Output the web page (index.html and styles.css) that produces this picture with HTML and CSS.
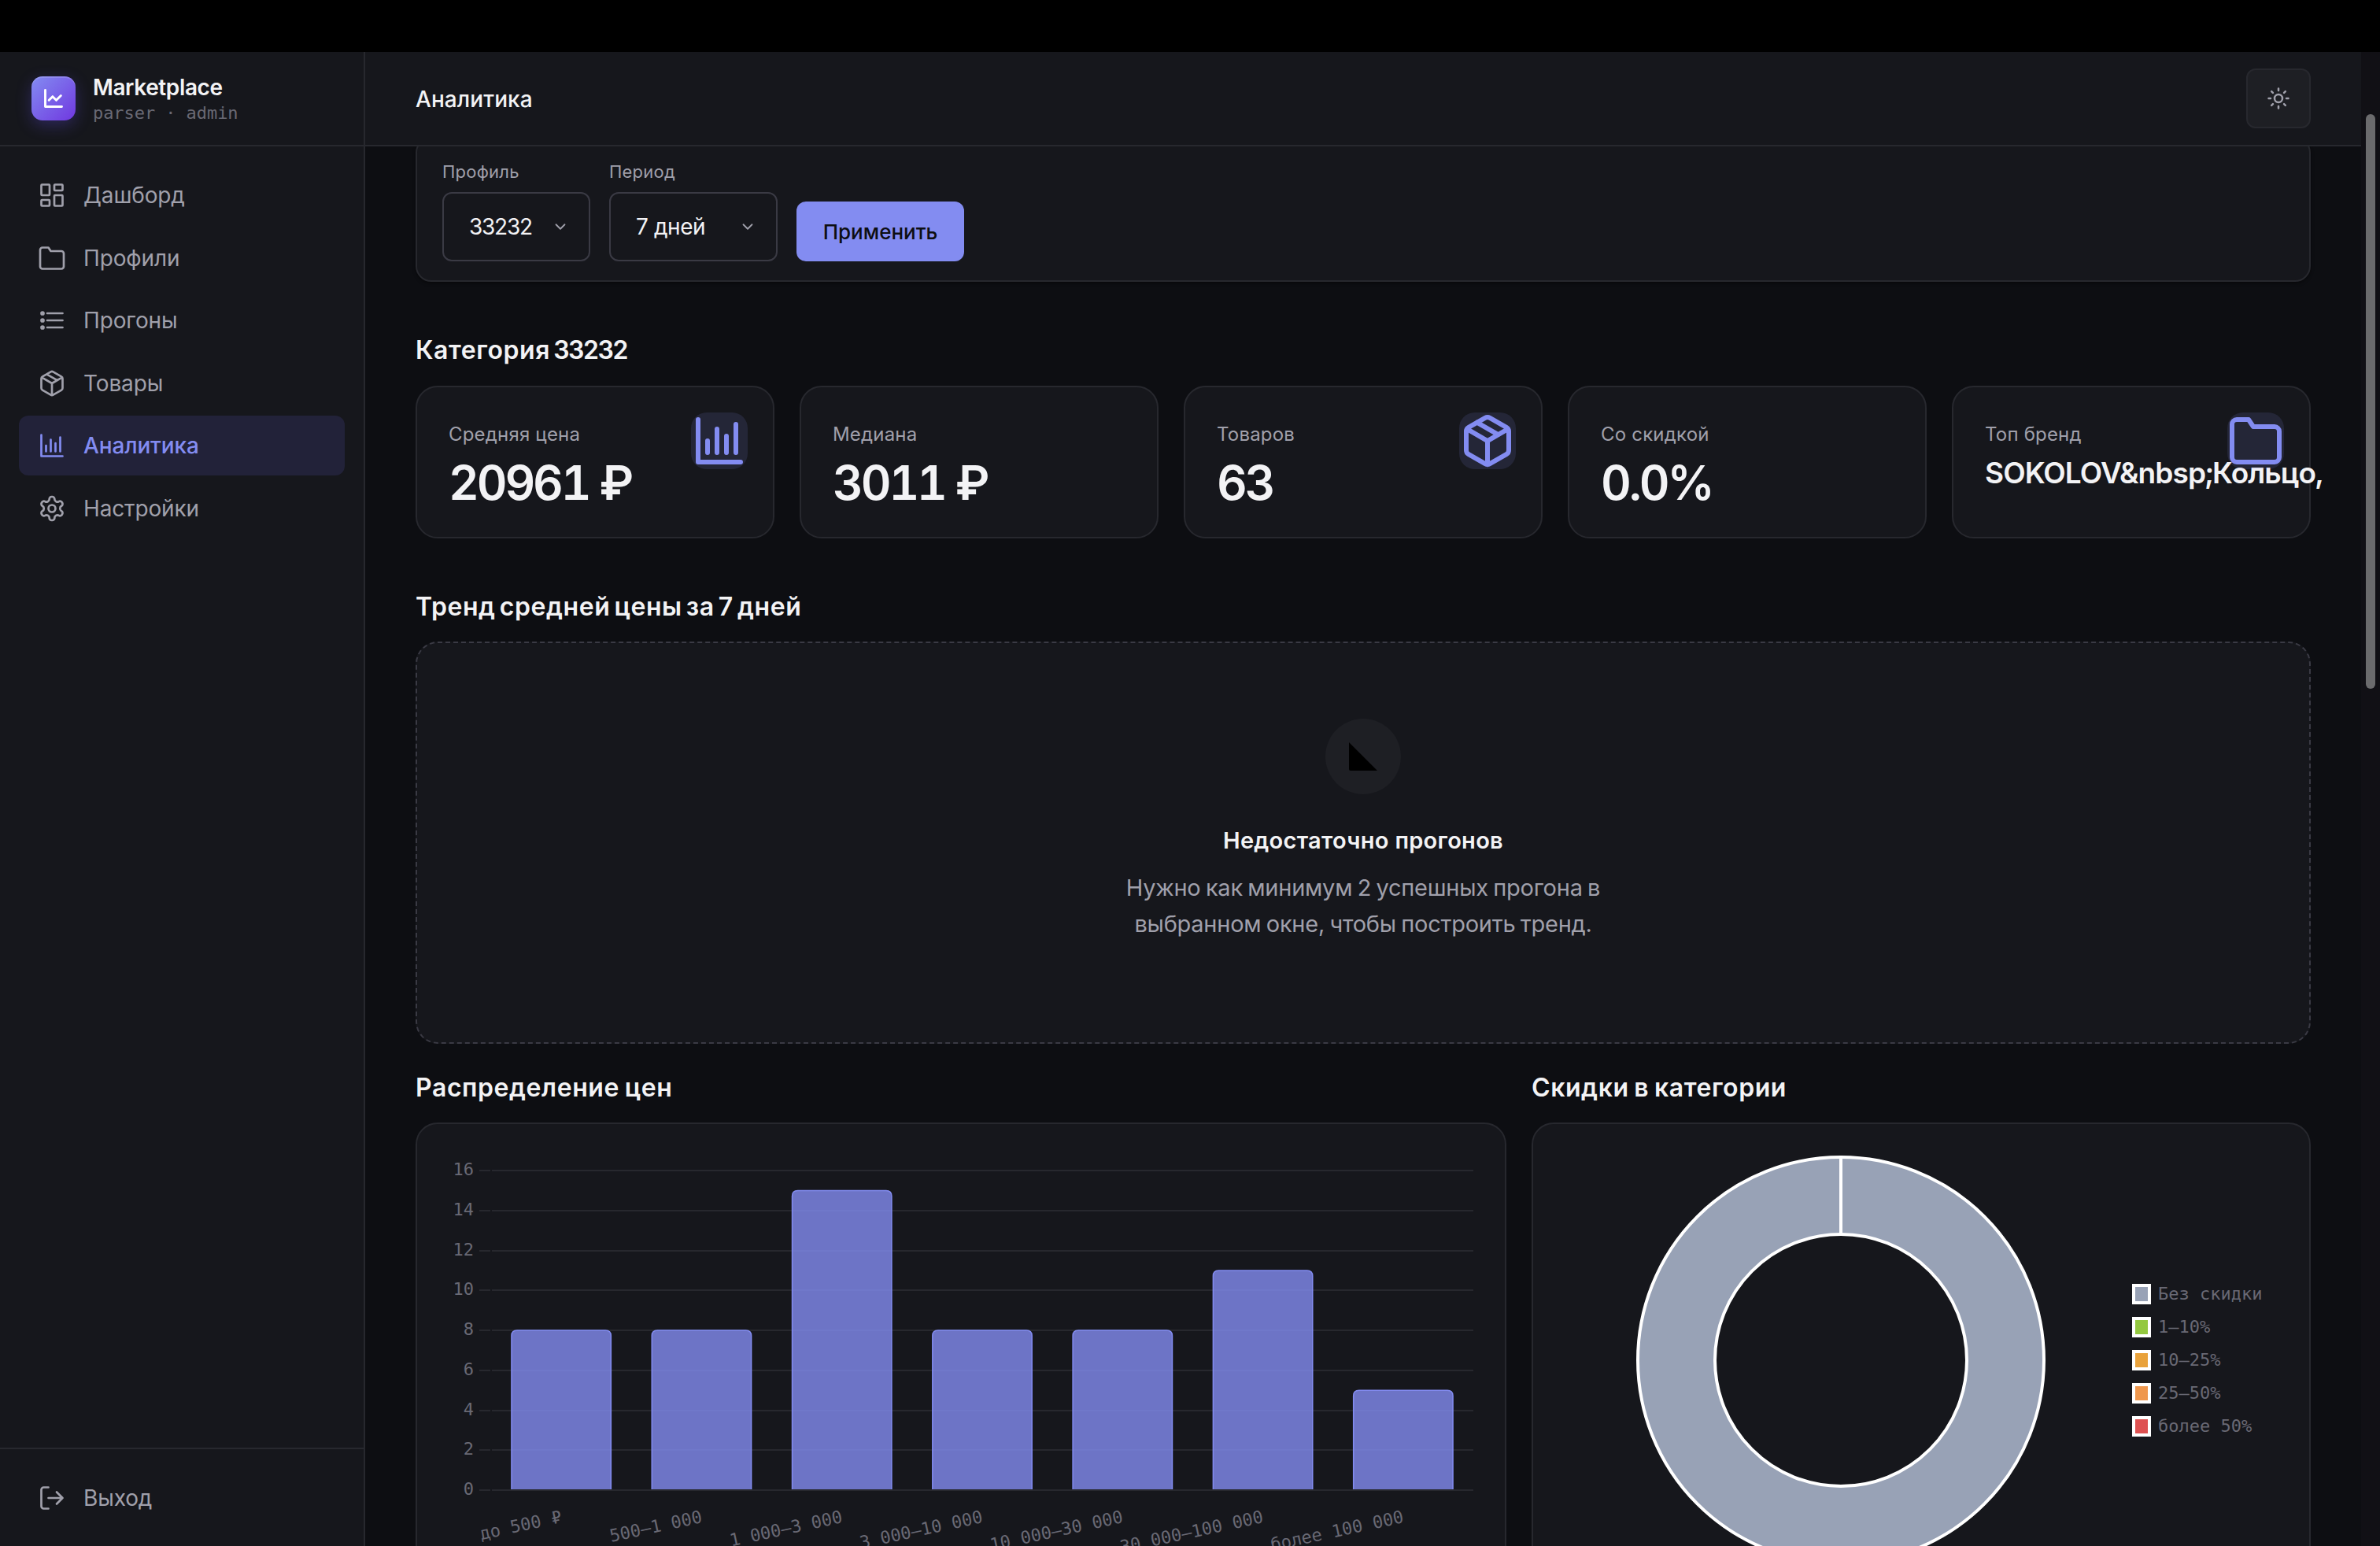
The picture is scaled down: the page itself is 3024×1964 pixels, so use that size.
FILE: index.html
```
<!DOCTYPE html>
<html lang="ru">
<head>
    <meta charset="UTF-8">
    <meta name="viewport" content="width=device-width, initial-scale=1.0">
    <title>Аналитика - Marketplace parser</title>
    <link rel="stylesheet" href="styles.css">
</head>
<body>
    <svg class="sprite" aria-hidden="true">
        <symbol id="i-dashboard" viewBox="0 0 24 24"><rect x="3" y="3" width="7" height="9" rx=".6"/><rect x="14" y="3" width="7" height="5" rx=".6"/><rect x="14" y="12" width="7" height="9" rx=".6"/><rect x="3" y="16" width="7" height="5" rx=".6"/></symbol>
        <symbol id="i-folder" viewBox="0 0 24 24"><path d="M22 19a2 2 0 0 1-2 2H4a2 2 0 0 1-2-2V5a2 2 0 0 1 2-2h5l2 3h9a2 2 0 0 1 2 2z"/></symbol>
        <symbol id="i-list" viewBox="0 0 24 24"><path d="M8 6h13M8 12h13M8 18h13"/><circle cx="4" cy="6" r="1"/><circle cx="4" cy="12" r="1"/><circle cx="4" cy="18" r="1"/></symbol>
        <symbol id="i-package" viewBox="0 0 24 24"><path d="M16.5 9.4l-9-5.19M21 16V8a2 2 0 0 0-1-1.73l-7-4a2 2 0 0 0-2 0l-7 4A2 2 0 0 0 3 8v8a2 2 0 0 0 1 1.73l7 4a2 2 0 0 0 2 0l7-4A2 2 0 0 0 21 16zM3.27 6.96L12 12.01l8.73-5.05M12 22.08V12"/></symbol>
        <symbol id="i-chart" viewBox="0 0 24 24"><path d="M3 3v18h18M7 12v5M11 7v10M15 10v7M19 5v12"/></symbol>
        <symbol id="i-settings" viewBox="0 0 24 24"><path d="M12.22 2h-.44a2 2 0 0 0-2 2v.18a2 2 0 0 1-1 1.73l-.43.25a2 2 0 0 1-2 0l-.15-.08a2 2 0 0 0-2.73.73l-.22.38a2 2 0 0 0 .73 2.73l.15.1a2 2 0 0 1 1 1.72v.51a2 2 0 0 1-1 1.74l-.15.09a2 2 0 0 0-.73 2.73l.22.38a2 2 0 0 0 2.73.73l.15-.08a2 2 0 0 1 2 0l.43.25a2 2 0 0 1 1 1.73V20a2 2 0 0 0 2 2h.44a2 2 0 0 0 2-2v-.18a2 2 0 0 1 1-1.73l.43-.25a2 2 0 0 1 2 0l.15.08a2 2 0 0 0 2.73-.73l.22-.39a2 2 0 0 0-.73-2.73l-.15-.08a2 2 0 0 1-1-1.74v-.5a2 2 0 0 1 1-1.74l.15-.09a2 2 0 0 0 .73-2.73l-.22-.38a2 2 0 0 0-2.73-.73l-.15.08a2 2 0 0 1-2 0l-.43-.25a2 2 0 0 1-1-1.73V4a2 2 0 0 0-2-2z"/><circle cx="12" cy="12" r="3"/></symbol>
        <symbol id="i-logout" viewBox="0 0 24 24"><path d="M9 21H5a2 2 0 0 1-2-2V5a2 2 0 0 1 2-2h4M16 17l5-5-5-5M21 12H9"/></symbol>
        <symbol id="i-sun" viewBox="0 0 24 24"><circle cx="12" cy="12" r="4"/><path d="M12 2v2M12 20v2M4.93 4.93l1.41 1.41M17.66 17.66l1.41 1.41M2 12h2M20 12h2M6.34 17.66l-1.41 1.41M19.07 4.93l-1.41 1.41"/></symbol>
        <symbol id="i-down" viewBox="0 0 24 24"><path d="M6 9l6 6 6-6"/></symbol>
    </svg>

    <div class="app">
        <aside class="sidebar">
            <div class="brand">
                <div class="brand-logo">
                    <svg viewBox="0 0 24 24"><path d="M3 3v18h18M7 14l4-4 4 4 5-5"/></svg>
                </div>
                <div class="brand-text">
                    <div class="brand-name">Marketplace</div>
                    <div class="brand-sub">parser · admin</div>
                </div>
            </div>
            <nav class="nav">
                <a class="nav-item"><svg><use href="#i-dashboard"/></svg>Дашборд</a>
                <a class="nav-item"><svg><use href="#i-folder"/></svg>Профили</a>
                <a class="nav-item"><svg><use href="#i-list"/></svg>Прогоны</a>
                <a class="nav-item"><svg><use href="#i-package"/></svg>Товары</a>
                <a class="nav-item active"><svg><use href="#i-chart"/></svg>Аналитика</a>
                <a class="nav-item"><svg><use href="#i-settings"/></svg>Настройки</a>
            </nav>
            <div class="sidebar-footer">
                <a class="nav-item"><svg><use href="#i-logout"/></svg>Выход</a>
            </div>
        </aside>

        <div class="main">
            <header class="topbar">
                <h1>Аналитика</h1>
                <button class="theme-toggle"><svg><use href="#i-sun"/></svg></button>
            </header>

            <main class="content">
                <div class="filters">
                    <div class="field">
                        <label>Профиль</label>
                        <div class="select select-profile">33232<svg><use href="#i-down"/></svg></div>
                    </div>
                    <div class="field">
                        <label>Период</label>
                        <div class="select select-period">7 дней<svg><use href="#i-down"/></svg></div>
                    </div>
                    <button class="btn">Применить</button>
                </div>

                <h2 class="section-title title-category">Категория <span class="category-id">33232</span></h2>
                <div class="stats">
                    <div class="stat">
                        <div class="stat-label">Средняя цена</div>
                        <div class="stat-value">20961 ₽</div>
                        <div class="stat-icon"><svg><use href="#i-chart"/></svg></div>
                    </div>
                    <div class="stat">
                        <div class="stat-label">Медиана</div>
                        <div class="stat-value">3011 ₽</div>
                    </div>
                    <div class="stat">
                        <div class="stat-label">Товаров</div>
                        <div class="stat-value">63</div>
                        <div class="stat-icon"><svg><use href="#i-package"/></svg></div>
                    </div>
                    <div class="stat">
                        <div class="stat-label">Со скидкой</div>
                        <div class="stat-value">0.0%</div>
                    </div>
                    <div class="stat">
                        <div class="stat-label">Топ бренд</div>
                        <div class="stat-value stat-brand">SOKOLOV&amp;nbsp;Кольцо,</div>
                        <div class="stat-icon"><svg><use href="#i-folder"/></svg></div>
                    </div>
                </div>

                <h2 class="section-title title-trend">Тренд средней цены за 7 дней</h2>
                <div class="empty">
                    <div class="empty-icon">
                        <svg viewBox="0 0 24 24"><path d="M3 3v17a1 1 0 0 0 1 1h17z"/></svg>
                    </div>
                    <div class="empty-title">Недостаточно прогонов</div>
                    <p class="empty-text">Нужно как минимум 2 успешных прогона в выбранном окне, чтобы построить тренд.</p>
                </div>

                <div class="charts">
                    <section>
                        <h2 class="section-title title-chart">Распределение цен</h2>
                        <div class="chart-card">
                            <svg id="histogram" class="histogram" viewBox="0 0 1382 560"></svg>
                        </div>
                    </section>
                    <section>
                        <h2 class="section-title title-chart">Скидки в категории</h2>
                        <div class="chart-card donut-card">
                            <svg class="donut" viewBox="0 0 520 520">
                                <circle class="donut-ring" cx="260" cy="260" r="209"/>
                                <circle class="donut-line" cx="260" cy="260" r="258"/>
                                <circle class="donut-line" cx="260" cy="260" r="160"/>
                                <path class="donut-line" d="M260 2v98"/>
                            </svg>
                            <ul class="legend">
                                <li class="l-none">Без скидки</li>
                                <li class="l-10">1–10%</li>
                                <li class="l-25">10–25%</li>
                                <li class="l-50">25–50%</li>
                                <li class="l-max">более 50%</li>
                            </ul>
                        </div>
                    </section>
                </div>
            </main>
        </div>

        <div class="scrollbar"><div class="scrollbar-thumb"></div></div>
    </div>

<script>
const bins = [
    { label: 'до 500 ₽', count: 8 },
    { label: '500–1 000', count: 8 },
    { label: '1 000–3 000', count: 15 },
    { label: '3 000–10 000', count: 8 },
    { label: '10 000–30 000', count: 8 },
    { label: '30 000–100 000', count: 11 },
    { label: 'более 100 000', count: 5 }
];

const left = 94, right = 1342, bottom = 465, unit = 25.375;
const step = (right - left) / bins.length;
const barWidth = step * 0.72;
let out = '';

// Сетка и подписи оси Y
for (let v = 0; v <= 16; v += 2) {
    const y = Math.round(bottom - v * unit);
    out += `<path class="grid" d="M79 ${y}H93M95 ${y}H${right}"/>
        <text class="tick" x="72" y="${y + 6}" text-anchor="end">${v}</text>`;
}

// Столбцы и наклонные подписи оси X
bins.forEach((bin, i) => {
    const cx = left + step * (i + 0.5);
    const x0 = cx - barWidth / 2 + 1, x1 = cx + barWidth / 2 - 1;
    const top = bottom - bin.count * unit;
    out += `<path class="bar" d="M${x0} ${bottom - 1}V${top + 7}q0 -7 7 -7H${x1 - 7}q7 0 7 7V${bottom - 1}"/>
        <text class="tick" transform="translate(${cx} 498) rotate(-12.2)" y="8" text-anchor="end">${bin.label}</text>`;
});

document.getElementById('histogram').innerHTML = out;
</script>
</body>
</html>
```
FILE: styles.css
```
:root {
    --bg: #0d0e12;
    --surface: #16171c;
    --surface-2: #1e1f24;
    --border: #27282e;
    --border-strong: #3a3a44;
    --text: #f3f3f5;
    --text-muted: #a0a0ab;
    --text-dim: #696974;
    --accent: #838cf1;
    --accent-soft: rgba(131, 140, 241, 0.13);
    --mono: "DejaVu Sans Mono", "Liberation Mono", monospace;
}

*, *::before {
    box-sizing: border-box;
}

body {
    margin: 0;
    padding-top: 66px;
    height: 1964px;
    overflow: hidden;
    background: #000;
    color: var(--text);
    font-family: Inter, "Liberation Sans", sans-serif;
}

h1, h2, p, ul {
    margin: 0;
    padding: 0;
}

button {
    font-family: inherit;
    padding: 0;
}

.sprite {
    display: none;
}

svg {
    display: block;
    fill: none;
    stroke: currentColor;
    stroke-width: 2;
    stroke-linecap: round;
    stroke-linejoin: round;
    flex-shrink: 0;
}

.app {
    display: flex;
    height: 1898px;
    background: var(--bg);
}

/* Sidebar */
.sidebar {
    display: flex;
    flex-direction: column;
    width: 464px;
    background: var(--surface);
    border-right: 2px solid var(--border);
}

.brand {
    display: flex;
    align-items: center;
    gap: 22px;
    height: 120px;
    padding: 0 40px;
    border-bottom: 2px solid var(--border);
}

.brand-logo {
    display: flex;
    align-items: center;
    justify-content: center;
    width: 56px;
    height: 56px;
    border-radius: 14px;
    background: linear-gradient(135deg, #838cf1, #7038e0);
    color: #fff;
    box-shadow: 0 6px 20px rgba(99, 80, 240, 0.3), inset 0 2px 0 rgba(255, 255, 255, 0.15);
}

.brand-logo svg {
    width: 28px;
    height: 28px;
    stroke-width: 2.5;
}

.brand-text {
    padding-top: 2px;
}

.brand-name {
    font-size: 28px;
    line-height: 34px;
    font-weight: 600;
    letter-spacing: -0.014em;
}

.brand-sub {
    font-family: var(--mono);
    font-size: 22px;
    line-height: 31px;
    letter-spacing: -0.003em;
    color: var(--text-dim);
}

.nav {
    display: flex;
    flex-direction: column;
    flex: 1;
    gap: 4px;
    padding: 24px;
}

.nav-item {
    display: flex;
    align-items: center;
    gap: 22px;
    height: 75.5px;
    padding: 1px 24px 0;
    border-radius: 12px;
    font-size: 28px;
    font-weight: 400;
    letter-spacing: -0.005em;
    color: var(--text-muted);
}

.nav-item svg {
    width: 36px;
    height: 36px;
    stroke-width: 1.8;
}

.nav-item.active {
    background: #222239;
    color: var(--accent);
    font-weight: 500;
}

.sidebar-footer {
    padding: 24px;
    border-top: 2px solid var(--border);
}

/* Topbar */
.main {
    flex: 1;
    display: flex;
    flex-direction: column;
    min-width: 0;
}

.topbar {
    display: flex;
    align-items: center;
    justify-content: space-between;
    flex-shrink: 0;
    height: 120px;
    padding: 0 64px;
    background: var(--surface);
    border-bottom: 2px solid var(--border);
}

.topbar h1 {
    padding-top: 2px;
    font-size: 28px;
    font-weight: 500;
    letter-spacing: 0.003em;
}

.theme-toggle {
    display: flex;
    align-items: center;
    justify-content: center;
    width: 82px;
    height: 76px;
    border: 2px solid var(--border);
    border-radius: 12px;
    background: var(--surface-2);
    color: var(--text-muted);
}

.theme-toggle svg {
    width: 30px;
    height: 30px;
}

/* Content is scrolled a little under the topbar */
.content {
    flex: 1;
    min-height: 0;
    overflow: hidden;
    padding: 0 64px;
}

.filters {
    display: flex;
    align-items: flex-end;
    gap: 24px;
    margin-top: -12px;
    padding: 24px 32px;
    background: var(--surface);
    border: 2px solid var(--border);
    border-radius: 20px;
    box-shadow: 0 2px 4px rgba(0, 0, 0, 0.4);
}

.field label {
    display: block;
    margin-bottom: 7px;
    font-size: 22px;
    line-height: 37px;
    font-weight: 400;
    letter-spacing: 0.01em;
    color: var(--text-muted);
}

.select {
    display: flex;
    align-items: center;
    justify-content: space-between;
    height: 88px;
    padding: 0 25px 0 32px;
    border: 2px solid var(--border-strong);
    border-radius: 12px;
    font-size: 28px;
    font-weight: 400;
    letter-spacing: -0.015em;
}

.select svg {
    width: 22px;
    height: 22px;
    color: var(--text-muted);
}

.select-profile {
    width: 188px;
    letter-spacing: -0.045em;
}

.select-period {
    width: 214px;
}

.btn {
    width: 213px;
    height: 76px;
    border: 0;
    border-radius: 12px;
    background: var(--accent);
    color: #0d0e12;
    font-size: 26px;
    font-weight: 500;
    letter-spacing: 0;
}

.section-title {
    font-size: 32px;
    line-height: 45px;
    font-weight: 600;
}

.title-category {
    margin: 64px 0 23px;
    letter-spacing: 0.018em;
    word-spacing: -0.14em;
}

.category-id {
    letter-spacing: -0.045em;
}

.title-trend {
    margin: 64px 0 22px;
    letter-spacing: 0.018em;
    word-spacing: -0.11em;
}

.title-chart {
    margin: 33px 0 22px;
    letter-spacing: 0.018em;
    word-spacing: -0.06em;
}

/* Stat cards */
.stats {
    display: grid;
    grid-template-columns: repeat(5, 1fr);
    gap: 32px;
}

.stat {
    position: relative;
    min-width: 0;
    height: 194px;
    padding: 42px 40px 0;
    background: var(--surface);
    border: 2px solid var(--border);
    border-radius: 28px;
}

.stat-label {
    margin-bottom: 10px;
    font-size: 24px;
    line-height: 36px;
    font-weight: 400;
    letter-spacing: 0.008em;
    color: var(--text-muted);
}

.stat-value {
    font-size: 60px;
    line-height: 66px;
    font-weight: 600;
    letter-spacing: -0.052em;
    font-variant-numeric: tabular-nums;
    white-space: nowrap;
}

.stat-brand {
    font-size: 37px;
    line-height: 42px;
    letter-spacing: -0.025em;
    font-weight: 600;
}

.stat-icon {
    position: absolute;
    top: 32px;
    right: 32px;
    border-radius: 20px;
    background: var(--accent-soft);
    color: var(--accent);
}

.stat-icon svg {
    width: 72px;
    height: 72px;
}

/* Empty state */
.empty {
    display: flex;
    flex-direction: column;
    align-items: center;
    height: 511px;
    padding-top: 96px;
    background: var(--surface);
    border: 2px dashed var(--border-strong);
    border-radius: 28px;
    text-align: center;
}

.empty-icon {
    display: flex;
    align-items: center;
    justify-content: center;
    width: 96px;
    height: 96px;
    margin-bottom: 37px;
    border-radius: 50%;
    background: var(--surface-2);
}

.empty-icon svg {
    width: 48px;
    height: 48px;
    fill: #000;
    stroke: none;
}

.empty-title {
    margin-bottom: 15px;
    font-size: 29px;
    line-height: 44px;
    font-weight: 600;
    letter-spacing: 0.01em;
}

.empty-text {
    max-width: 640px;
    font-size: 29px;
    line-height: 46px;
    letter-spacing: -0.009em;
    word-spacing: -0.05em;
    color: var(--text-muted);
}

/* Charts */
.charts {
    display: grid;
    grid-template-columns: 1386fr 990fr;
    gap: 32px;
}

.chart-card {
    height: 640px;
    background: var(--surface);
    border: 2px solid var(--border);
    border-radius: 28px;
}

.histogram {
    width: 1382px;
    height: 560px;
}

.grid {
    stroke: var(--border);
    stroke-linecap: butt;
}

.tick {
    font-family: var(--mono);
    font-size: 22px;
    fill: var(--text-dim);
    stroke: none;
}

.bar {
    fill: rgba(131, 140, 241, 0.8);
    stroke: var(--accent);
    stroke-width: 1.5;
    stroke-linecap: butt;
}

.donut-card {
    display: flex;
    align-items: flex-start;
    padding: 40px 0 0 131px;
}

.donut {
    width: 520px;
    height: 520px;
}

.donut-ring {
    stroke: #98a2b6;
    stroke-width: 98;
}

.donut-line {
    stroke: #fff;
    stroke-width: 4;
    stroke-linecap: butt;
}

.legend {
    display: flex;
    flex-direction: column;
    gap: 16px;
    margin: 163px 0 0 110px;
    list-style: none;
}

.legend li {
    display: flex;
    align-items: center;
    gap: 9px;
    font-family: var(--mono);
    font-size: 22px;
    line-height: 26px;
    white-space: nowrap;
    color: var(--text-dim);
}

.legend li::before {
    content: "";
    width: 24px;
    height: 26px;
    border: 4px solid #fff;
    background: var(--swatch);
}

.l-none { --swatch: #98a2b6; }
.l-10 { --swatch: #93c83f; }
.l-25 { --swatch: #e9a23b; }
.l-50 { --swatch: #ef974d; }
.l-max { --swatch: #de5151; }

/* Scrollbar */
.scrollbar {
    width: 24px;
    padding: 79px 6px 0;
    background: #111015;
}

.scrollbar-thumb {
    height: 730px;
    border-radius: 6px;
    background: #6b6b6d;
}
```
